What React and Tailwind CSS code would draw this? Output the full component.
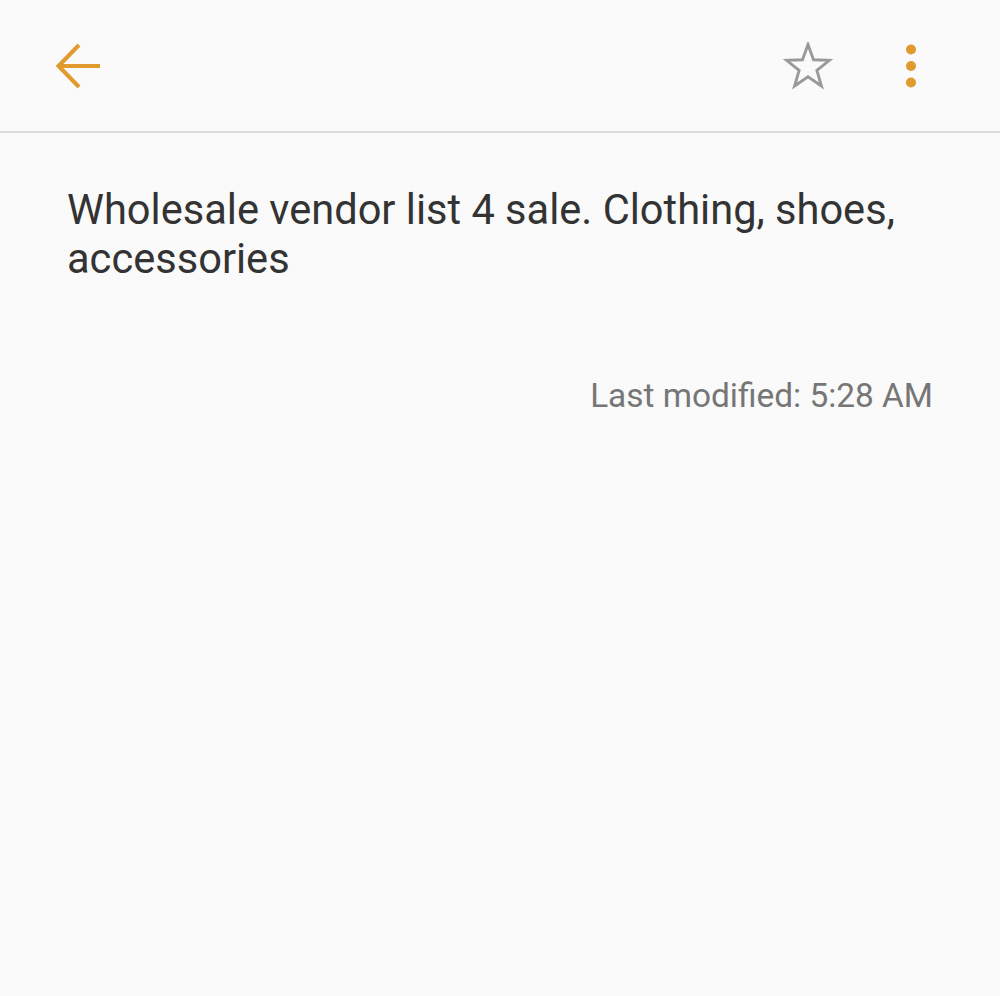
export default function App() {
  return (
    <div className="w-[1000px] h-[996px] bg-[#fafafa] flex flex-col" style={{ fontFamily: "Roboto, sans-serif" }}>
      <div className="h-[133px] border-b-2 border-[#dcdcdc] flex items-center pl-[55px] pr-[83px] shrink-0">
        <svg width="46" height="48" viewBox="0 0 46 48">
          <path d="M45 24H5M24 3L3.5 24L24 45" fill="none" stroke="#e09a2e" strokeWidth="4" />
        </svg>
        <div className="flex-1" />
        <svg width="50" height="48" viewBox="0 0 50 48" className="mr-[72px]">
          <path d="M25 2.5L30.5 17.8L46.5 18.3L33.9 28.3L38.4 44L25 34.8L11.6 44L16.1 28.3L3.5 18.3L19.5 17.8Z" fill="none" stroke="#9a9a9a" strokeWidth="2.9" strokeLinejoin="miter" />
        </svg>
        <svg width="12" height="48" viewBox="0 0 12 48">
          <circle cx="6" cy="7.5" r="5" fill="#e09a2e" />
          <circle cx="6" cy="24" r="5" fill="#e09a2e" />
          <circle cx="6" cy="40.5" r="5" fill="#e09a2e" />
        </svg>
      </div>
      <div className="px-[67px] pt-[52px]">
        <p className="text-[41.6px] leading-[49px] text-[#333333]">Wholesale vendor list 4 sale. Clothing, shoes, accessories</p>
        <p className="text-right text-[33.4px] leading-[40px] text-[#767676] mt-[93px]">Last modified: 5:28 AM</p>
      </div>
    </div>
  );
}
